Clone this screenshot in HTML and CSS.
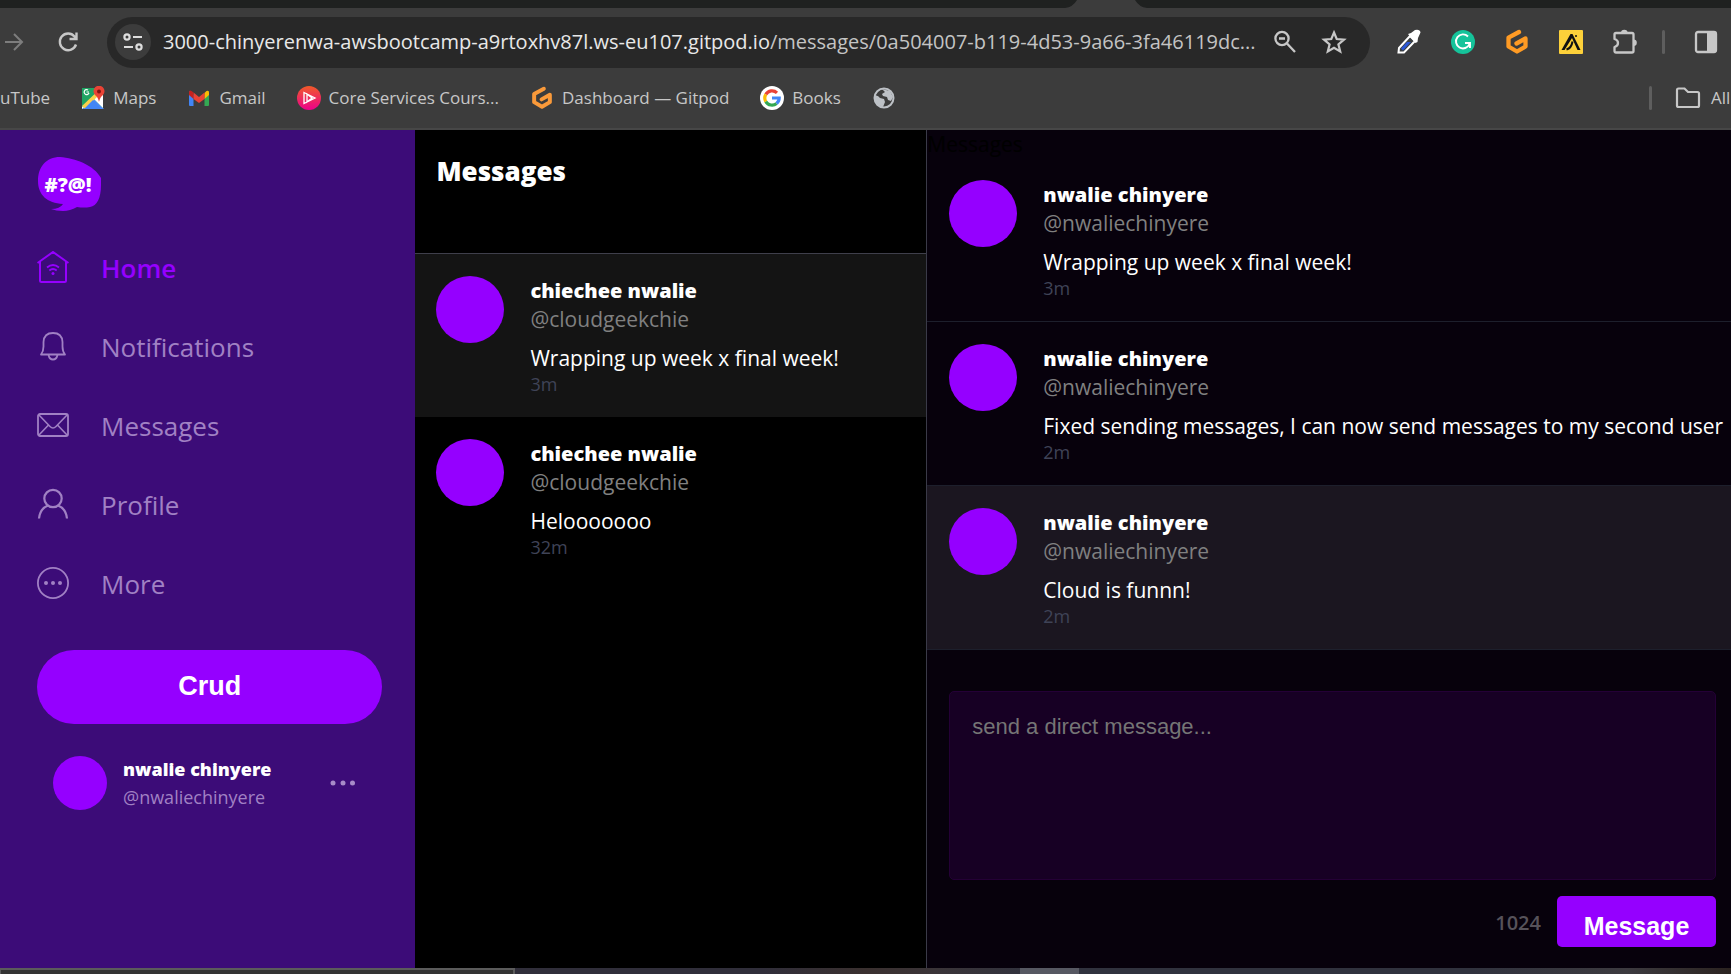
FILE: index.html
```html
<!DOCTYPE html>
<html lang="en">
<head>
<meta charset="utf-8">
<title>Messages</title>
<link rel="stylesheet" href="styles.css">
</head>
<body>
<header class="browser">
  <div class="tabstrip">
    <svg class="tab" width="82" height="8" viewBox="0 0 82 8"><path d="M0 8Q8 7 12 0H70Q74 7 82 8Z" fill="#3c3c3c"/></svg>
  </div>
  <div class="toolbar">
    <button class="tool" aria-label="Forward"><svg width="24" height="24" viewBox="0 0 24 24" fill="none" stroke="#7d7d7d" stroke-width="2"><path d="M5 12H22M14 4l8 8-8 8"/></svg></button>
    <button class="tool" aria-label="Reload"><svg width="24" height="24" viewBox="0 0 24 24" fill="none" stroke="#c7c7c7" stroke-width="2.4"><path d="M20 14.500A8.300 8.300 0 1 1 18.500 6.500L20 8.500M20.500 2.500V9H13.500"/></svg></button>
    <div class="omnibox">
      <button class="site-info" aria-label="Site information"><svg width="20" height="20" viewBox="0 0 20 20" fill="none" stroke="#dedede" stroke-width="2.200"><circle cx="4" cy="5" r="2.600"/><path d="M10 5h9M1 15h9"/><circle cx="16" cy="15" r="2.600"/></svg></button>
      <div class="url"><span class="host">3000-chinyerenwa-awsbootcamp-a9rtoxhv87l.ws-eu107.gitpod.io</span>/messages/0a504007-b119-4d53-9a66-3fa46119dc...</div>
      <button class="tool" aria-label="Zoom"><svg width="24" height="24" viewBox="0 0 24 24" fill="none" stroke="#c7c7c7" stroke-width="2.300"><circle cx="9" cy="8.500" r="6.600"/><path d="M14 13.500L22 22M6 8.500h6"/></svg></button>
      <button class="tool" aria-label="Bookmark this page"><svg width="26" height="26" viewBox="0 0 26 26" fill="none" stroke="#c7c7c7" stroke-width="2.200"><path d="M13 3.500l2.700 6.500 7.300.6-5.600 4.700 1.800 7.200L13 18.700l-6.200 3.800 1.800-7.200L3 10.600l7.300-.6z"/></svg></button>
    </div>
    <div class="extensions">
      <button class="tool" aria-label="Colour picker"><svg width="26" height="26" viewBox="0 0 26 26"><path d="M3 19L14 7l5 5L8 23.500H2.500z" fill="#3c4043" stroke="#fff" stroke-width="2"/><path d="M5 19.500l6-6.500h4L7 21.500z" fill="#2a56d6"/><path d="M12 5l3-1 4-3q5-1 5.500 2.500L22 9l-.5 4-2 1z" fill="#fff"/></svg></button>
      <button class="tool" aria-label="Grammarly"><svg width="26" height="26" viewBox="0 0 26 26"><circle cx="13" cy="13" r="12" fill="#15c39a"/><path d="M18 7.500A7 7 0 1 0 19.500 15M15 14h5v5" fill="none" stroke="#fff" stroke-width="1.900"/></svg></button>
      <button class="tool" aria-label="Gitpod"><svg width="26" height="26" viewBox="0 0 26 26"><path d="M15 3L4.500 8.700V17.500L13 22.500l8.500-5V9.500L12.500 14.500" fill="none" stroke="#ff9b24" stroke-width="4.300" stroke-linejoin="round" stroke-linecap="round"/></svg></button>
      <button class="tool" aria-label="Apollo"><svg width="26" height="26" viewBox="0 0 26 26"><rect x="1" y="1" width="24" height="24" rx="1" fill="#fdd13a"/><path d="M3.500 21H6.500L14 9l5.500 12H22.500L14.500 5H12.500z" fill="#111"/><path d="M8.500 20.500q5-1.500 6-8" fill="none" stroke="#111" stroke-width="2"/><circle cx="18" cy="7" r="1" fill="#111"/></svg></button>
      <button class="tool" aria-label="Extensions"><svg width="26" height="26" viewBox="0 0 26 26"><path d="M2.500 5.500q0-1.500 1.500-1.500H20q1.500 0 1.500 1.500V22q0 1.500-1.500 1.500H4q-1.500 0-1.500-1.500V18q3.500-1 3.500-4t-3.500-4z" fill="none" stroke="#c7c7c7" stroke-width="2.300" stroke-linejoin="round"/><path d="M9 4a3.300 3.300 0 0 1 6.600 0zM21.500 10.500a3.300 3.300 0 0 1 0 6.600z" fill="#c7c7c7"/></svg></button>
      <span class="divider"></span>
      <button class="tool" aria-label="Side panel"><svg width="26" height="26" viewBox="0 0 26 26"><rect x="3" y="3" width="20" height="20" rx="2" fill="none" stroke="#c7c7c7" stroke-width="2.300"/><path d="M14 3h9v20h-9z" fill="#c7c7c7"/></svg></button>
    </div>
  </div>
  <nav class="bookmarks" aria-label="Bookmarks">
    <a href="#">uTube</a>
    <a href="#"><svg width="24" height="24" viewBox="0 0 24 24"><path d="M1 2h21v21H1z" fill="#1fa463"/><path d="M1 23l11-11 11 11z" fill="#4a89f3"/><path d="M1 23V21L19 4l3 3v15l-9-9z" fill="#fff"/><path d="M1 20L20 2l2 3L4 23z" fill="#fbd14b"/><path d="M3 23l9-9 8 9z" fill="#4285f4"/><path d="M18 16q-1-5-4-7a5.500 5.500 0 1 1 8 0q-3 2-4 7z" fill="#ea4335"/><circle cx="18" cy="5.500" r="2" fill="#811411"/><path d="M8 6H5.500M7 4A2.500 2.500 0 1 0 8 7" fill="none" stroke="#fff" stroke-width="1.200"/></svg>Maps</a>
    <a href="#"><svg width="24" height="24" viewBox="0 0 24 24"><path d="M2 5l4.500 3.500V20H3q-1 0-1-1z" fill="#4285f4"/><path d="M22 5l-4.500 3.500V20H21q1 0 1-1z" fill="#34a853"/><path d="M17.500 7l2-2q2.500-1 2.500 1.500V9l-4.500 4z" fill="#fbbc04"/><path d="M6.500 6.500L12 11l5.500-4.500V13L12 17 6.500 13z" fill="#ea4335"/><path d="M2 6.500Q2 3.500 4.500 5l2 1.500V13L2 9z" fill="#c5221f"/></svg>Gmail</a>
    <a href="#"><svg width="24" height="24" viewBox="0 0 24 24"><defs><linearGradient id="core" x1="0" y1="0" x2="0" y2="1"><stop stop-color="#f05a28"/><stop offset="1" stop-color="#ec008c"/></linearGradient></defs><circle cx="12" cy="12" r="12" fill="url(#core)"/><path d="M7 6.500L18 12 7 17.500zM10 8l5 4-5 4z" fill="none" stroke="#fff" stroke-width="1.300"/></svg>Core Services Cours...</a>
    <a href="#"><svg width="24" height="24" viewBox="0 0 26 26"><path d="M15 3L4.500 8.700V17.500L13 22.500l8.500-5V9.500L12.500 14.500" fill="none" stroke="#fa9a3a" stroke-width="4.300" stroke-linejoin="round" stroke-linecap="round"/></svg>Dashboard — Gitpod</a>
    <a href="#"><svg width="24" height="24" viewBox="0 0 24 24"><circle cx="12" cy="12" r="12" fill="#fff"/><g fill="none" stroke-width="3.200"><path d="M17 6.800A7.200 7.200 0 0 0 5.800 8.400" stroke="#ea4335"/><path d="M5.800 8.400a7.200 7.200 0 0 0 0 7.200" stroke="#fbbc05"/><path d="M5.800 15.600a7.200 7.200 0 0 0 10.800 1.900" stroke="#34a853"/><path d="M16.600 17.500A7.200 7.200 0 0 0 19.200 12H12" stroke="#4285f4"/></g></svg>Books</a>
    <a href="#" aria-label="Untitled bookmark"><svg width="24" height="24" viewBox="0 0 24 24"><circle cx="12" cy="12" r="9.500" fill="#3c3c3c" stroke="#bdc1c6" stroke-width="2"/><path d="M3 9q4 1 5 3l4 1 1 3-2 5-5-2-3-4zM10 3l8 2 3 6-2 4-3-1-1-3-4-1-1-2 3-2z" fill="#bdc1c6"/></svg></a>
    <span class="spacer"></span>
    <span class="divider"></span>
    <a href="#" class="all"><svg width="26" height="24" viewBox="0 0 26 24"><path d="M2 4q0-1.500 1.500-1.500h6L13 6h9.500Q24 6 24 7.500v12q0 1.500-1.500 1.500h-19Q2 21 2 19.500z" fill="none" stroke="#c7c7c7" stroke-width="2.200"/></svg>All</a>
  </nav>
</header>

<main class="app">
  <aside class="sidebar">
    <svg class="logo" width="64" height="54" viewBox="0 0 64 54" role="img" aria-label="Cruddur"><path d="M1 24C1 10 9 0 23 0c15 1 34 8 41 21v7c0 13-4 21-11 22q-6 1-13 0-7 4-14 4-7 0-12-2 9 0 12-5C10 46 1 38 1 24z" fill="#9500ff"/><text class="logo-text" x="31" y="35" text-anchor="middle">#?@!</text></svg>
    <nav class="menu">
      <a href="#" class="active"><svg width="32" height="34" viewBox="0 0 32 34"><path d="M0.500 12L16 1l15.500 11M3 10.500v19q0 1.500 1.500 1.500h23q1.500 0 1.500-1.500V10.500" stroke-width="2"/><path d="M10 16.500q6-5 12 0M12.300 19.500q3.700-3 7.400 0" stroke-width="1.800"/><circle cx="16" cy="22.500" r="1.500" class="dot"/></svg>Home</a>
      <a href="#"><svg width="32" height="34" viewBox="0 0 32 34"><path d="M4 24.500q2.500-3 2.500-8V12Q7 3 16 3t9.500 9v4.500q0 5 2.500 8zM11.500 25q1 4.500 4.500 4.500t4.500-4.500" stroke-width="1.800" stroke-linejoin="round"/></svg>Notifications</a>
      <a href="#"><svg width="32" height="34" viewBox="0 0 32 34"><rect x="1" y="5" width="30" height="22" rx="2" stroke-width="1.800"/><path d="M1.500 5.500L13 17.500q3 3 6 0L30.500 5.500M1.500 26.500l10-10.500M30.500 26.500l-10-10.500" stroke-width="1.600"/></svg>Messages</a>
      <a href="#"><svg width="32" height="34" viewBox="0 0 32 34"><circle cx="16" cy="10.500" r="8.700" stroke-width="2.200"/><path d="M2 30.500q1-10 9-13M30 30.500q-1-10-9-13" stroke-width="2.200"/></svg>Profile</a>
      <a href="#"><svg width="32" height="34" viewBox="0 0 32 34"><circle cx="16" cy="16" r="15.100" stroke-width="1.800"/><g class="dot"><circle cx="9" cy="16" r="2"/><circle cx="16" cy="16" r="2"/><circle cx="23" cy="16" r="2"/></g></svg>More</a>
    </nav>
    <button class="crud">Crud</button>
    <div class="profile">
      <span class="avatar small"></span>
      <div class="who"><strong>nwalie chinyere</strong><span>@nwaliechinyere</span></div>
      <button class="tool" aria-label="Account options"><svg width="26" height="8" viewBox="0 0 26 8" fill="#a78bc8"><circle cx="3" cy="4" r="2.500"/><circle cx="13" cy="4" r="2.500"/><circle cx="22.500" cy="4" r="2.500"/></svg></button>
    </div>
  </aside>

  <section class="groups">
    <h1>Messages</h1>
    <a href="#" class="item current"><span class="avatar"></span><span class="body"><strong>chiechee nwalie</strong><span class="handle">@cloudgeekchie</span><span class="message">Wrapping up week x final week!</span><time>3m</time></span></a>
    <a href="#" class="item"><span class="avatar"></span><span class="body"><strong>chiechee nwalie</strong><span class="handle">@cloudgeekchie</span><span class="message">Helooooooo</span><time>32m</time></span></a>
  </section>

  <section class="thread">
    <h2>Messages</h2>
    <a href="#" class="item"><span class="avatar"></span><span class="body"><strong>nwalie chinyere</strong><span class="handle">@nwaliechinyere</span><span class="message">Wrapping up week x final week!</span><time>3m</time></span></a>
    <a href="#" class="item"><span class="avatar"></span><span class="body"><strong>nwalie chinyere</strong><span class="handle">@nwaliechinyere</span><span class="message">Fixed sending messages, I can now send messages to my second user</span><time>2m</time></span></a>
    <a href="#" class="item current"><span class="avatar"></span><span class="body"><strong>nwalie chinyere</strong><span class="handle">@nwaliechinyere</span><span class="message">Cloud is funnn!</span><time>2m</time></span></a>
    <form class="composer">
      <textarea aria-label="Direct message" placeholder="send a direct message..."></textarea>
      <div class="submit"><span class="count">1024</span><button type="button">Message</button></div>
    </form>
  </section>
</main>
<footer class="taskbar"><span class="window"></span><span class="highlight"></span></footer>
</body>
</html>
```
FILE: styles.css
```css
* { box-sizing: border-box; }

body {
  margin: 0;
  height: 100vh;
  display: flex;
  flex-direction: column;
  overflow: hidden;
  background: #000;
  color: #fff;
  font-family: "Open Sans", "Noto Sans", sans-serif;
}

a { color: inherit; text-decoration: none; }
button { border: 0; padding: 0; background: none; color: inherit; font: inherit; }
svg { display: block; flex: none; }

/* Browser chrome */
.browser {
  flex: none;
  background: #3c3c3c;
  border-bottom: 2px solid #474747;
}
.tabstrip { height: 8px; background: #1f2120; }
.tab { margin-left: 1065px; }
.toolbar {
  display: flex;
  align-items: center;
  height: 68px;
}
.toolbar > .tool:first-child { margin-right: 32px; }
.toolbar > .tool { flex: none; }
.omnibox {
  flex: 1;
  min-width: 0;
  display: flex;
  align-items: center;
  height: 51px;
  margin-left: 27px;
  padding: 0 23px 0 8px;
  border-radius: 26px;
  background: #282828;
}
.omnibox .tool { margin-left: 24px; }
.omnibox .url + .tool { margin-left: 12px; }
.site-info {
  display: grid;
  place-items: center;
  flex: none;
  width: 36px;
  height: 36px;
  border-radius: 50%;
  background: #3c3c3c;
}
.url {
  flex: 1;
  min-width: 0;
  margin-left: 12px;
  white-space: nowrap;
  font-size: 20px;
  line-height: 30px;
  color: #c4c4c4;
}
.host { color: #e8e8e8; }
.extensions {
  flex: none;
  display: flex;
  align-items: center;
  gap: 28px;
  padding: 0 12px 0 26px;
}
.extensions .divider { margin: 0 0 0 -4px; }
.divider {
  flex: none;
  width: 3px;
  height: 24px;
  border-radius: 2px;
  background: #5e5e5e;
}
.bookmarks {
  display: flex;
  align-items: center;
  height: 52px;
  padding-bottom: 8px;
  gap: 31px;
  font-size: 17px;
  line-height: 26px;
  color: #c7c7c7;
  white-space: nowrap;
}
.bookmarks a { display: flex; align-items: center; gap: 8px; }
.bookmarks .spacer { flex: 1; }
.bookmarks .divider { margin-right: -8px; }
.bookmarks .all { gap: 10px; width: 56px; }

/* App */
.app {
  flex: 1;
  min-height: 0;
  display: grid;
  grid-template-columns: 24% minmax(0, 512fr) minmax(0, 804fr);
}
.avatar {
  flex: none;
  width: 68px;
  height: 67px;
  border-radius: 50%;
  background: #9500ff;
}
.avatar.small { width: 54px; height: 54px; }

.sidebar { padding: 27px 33px 0 37px; background: #3c0c78; }
.logo { margin-bottom: 17px; }
.logo-text { fill: #fff; font-size: 20px; font-weight: 800; }
.menu a {
  display: flex;
  align-items: center;
  gap: 32px;
  height: 79px;
  font-size: 26px;
  line-height: 36px;
  color: #a181c4;
}
.menu svg { fill: none; stroke: currentColor; }
.menu .dot { fill: currentColor; stroke: none; }
.menu .active { color: #9500ff; font-weight: 600; }
.crud {
  display: block;
  width: 100%;
  height: 74px;
  margin-top: 27px;
  padding-bottom: 2px;
  border-radius: 37px;
  background: #9500ff;
  font: bold 27px "Liberation Sans", sans-serif;
}
.profile {
  display: flex;
  align-items: center;
  gap: 16px;
  margin-top: 31px;
  padding: 0 26px 0 16px;
}
.who {
  flex: 1;
  display: flex;
  flex-direction: column;
  font-size: 18px;
  line-height: 28px;
}
.who strong { font-weight: 800; }
.who span { color: #a181c4; }

.groups { border-right: 1px solid #3a3a48; }
h1 {
  height: 124px;
  margin: 0;
  padding: 23px 21px;
  border-bottom: 1px solid #3f3f4b;
  font-size: 26px;
  line-height: 36px;
  font-weight: 800;
}
.thread {
  display: flex;
  flex-direction: column;
  background: #07010c;
}
h2 {
  margin: 0;
  font-size: 21px;
  line-height: 28px;
  font-weight: 400;
  color: #000;
}
.item {
  display: flex;
  gap: 26px;
  padding: 22px 21px 21px;
}
.thread .item { padding-left: 22px; }
.body {
  display: flex;
  flex-direction: column;
  padding-top: 1px;
  font-size: 21px;
  line-height: 28px;
  white-space: nowrap;
}
.body strong { font-size: 20px; font-weight: 800; }
.handle { color: #808080; }
.message { margin-top: 11px; }
.body time { font-size: 18px; line-height: 24px; color: #3f4357; }
.groups .current { background: #141414; }
.thread .item { border-bottom: 1px solid #1d1f2c; }
.thread .current { background: #1b1620; }

.composer {
  flex: 1;
  display: flex;
  flex-direction: column;
  padding: 41px 15px 21px 22px;
}
.composer textarea {
  flex: 1;
  width: 100%;
  padding: 22px;
  border: 1px solid #240036;
  border-radius: 5px;
  background: #170024;
  color: #fff;
  font: 22px "Liberation Sans", sans-serif;
  resize: none;
}
.composer textarea::placeholder { color: #757575; opacity: 1; }
.submit {
  display: flex;
  justify-content: flex-end;
  align-items: center;
  gap: 16px;
  margin-top: 16px;
}
.count { padding-top: 2px; font-size: 20px; font-weight: 600; color: #56525a; }
.submit button {
  width: 159px;
  height: 51px;
  padding-top: 10px;
  border-radius: 5px;
  background: #9500ff;
  font: bold 25px "Liberation Sans", sans-serif;
}

.taskbar {
  flex: none;
  display: flex;
  height: 6px;
  background: linear-gradient(90deg, #302e3a 0 44%, #3a302f 50%, #3a3438 54%, #30323e 60% 85%, #3c3a3f 94%, #2b2320);
}
.taskbar .window {
  width: 515px;
  border: 2px solid #5b5b5b;
  border-width: 2px 2px 0 1px;
  background: #333;
}
.taskbar .highlight { width: 59px; margin-left: 505px; background: #565862; }
```
